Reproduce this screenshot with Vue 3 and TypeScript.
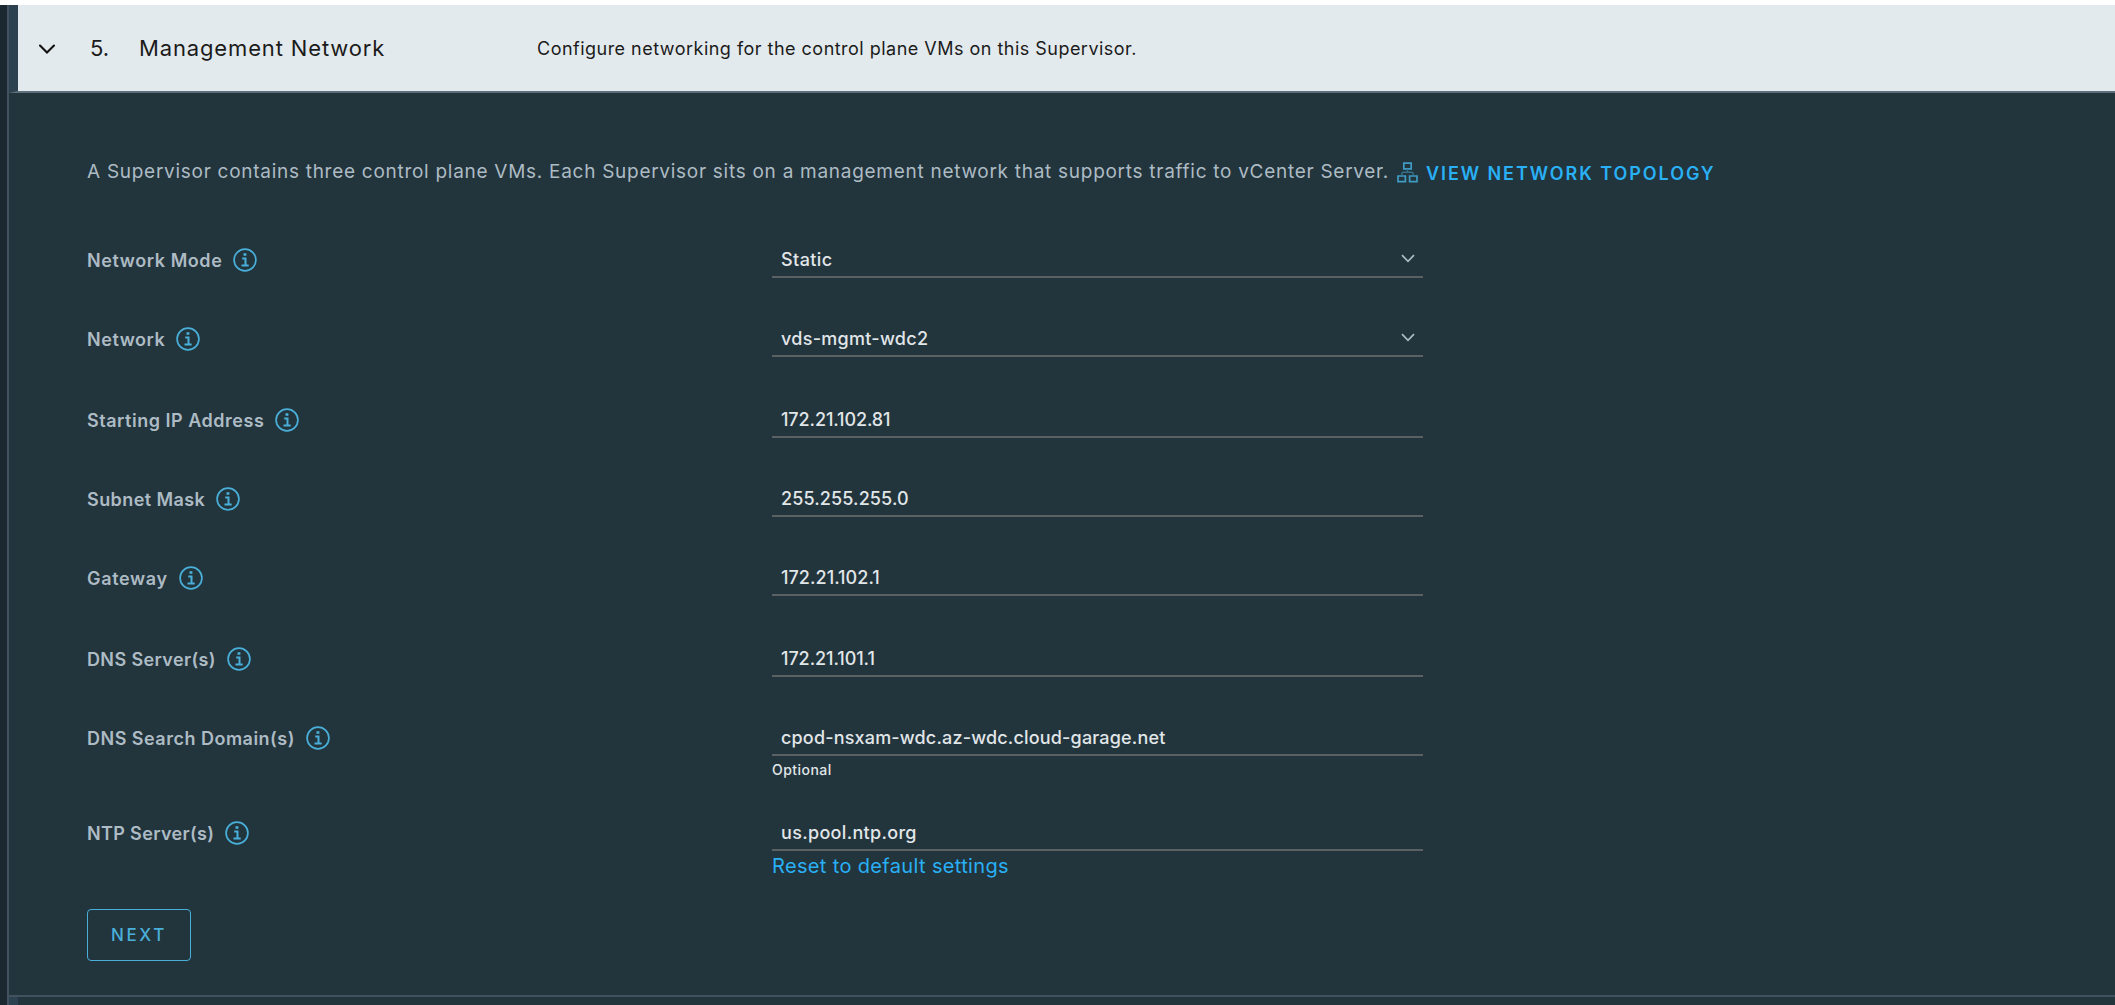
<script setup lang="ts">
interface Field {
  label: string
  value: string
  height: number
  labelSpacing: number
  valueSpacing: number
  select?: boolean
  hint?: string
  action?: string
}

const fields: Field[] = [
  { label: 'Network Mode', value: 'Static', height: 79, labelSpacing: 0.58, valueSpacing: 0.42, select: true },
  { label: 'Network', value: 'vds-mgmt-wdc2', height: 81, labelSpacing: 0.55, valueSpacing: 0.28, select: true },
  { label: 'Starting IP Address', value: '172.21.102.81', height: 79, labelSpacing: 0.52, valueSpacing: -0.1 },
  { label: 'Subnet Mask', value: '255.255.255.0', height: 79, labelSpacing: 0.42, valueSpacing: 0.12 },
  { label: 'Gateway', value: '172.21.102.1', height: 81, labelSpacing: 0.66, valueSpacing: 0.05 },
  { label: 'DNS Server(s)', value: '172.21.101.1', height: 79, labelSpacing: 0.37, valueSpacing: -0.07 },
  { label: 'DNS Search Domain(s)', value: 'cpod-nsxam-wdc.az-wdc.cloud-garage.net', height: 95, labelSpacing: 0.49, valueSpacing: 0.17, hint: 'Optional' },
  { label: 'NTP Server(s)', value: 'us.pool.ntp.org', height: 95, labelSpacing: 0.35, valueSpacing: 0.32, action: 'Reset to default settings' },
]
</script>

<template>
  <div class="page">
    <div class="gutter"></div>
    <main class="wizard">
      <header class="step-header">
        <svg class="caret" viewBox="0 0 16 10"><path d="M1 1.5 8 8.5 15 1.5" /></svg>
        <span class="step-number">5.</span>
        <h1 class="step-title">Management Network</h1>
        <span class="step-summary">Configure networking for the control plane VMs on this Supervisor.</span>
      </header>

      <section class="step-body">
        <div class="intro">
          <p>A Supervisor contains three control plane VMs. Each Supervisor sits on a management network that supports traffic to vCenter Server.</p>
          <a class="topology">
            <svg class="topology-icon" viewBox="0 0 21 21">
              <path d="M6.8 1.2h7.4v5.6H6.8zM1 14h7.4v5.6H1zM12.6 14H20v5.6h-7.4z" />
              <path class="link-line" d="M10.5 6.8v3.4M4.7 13.6v-1.4q0-2 2-2h7.6q2 0 2 2v1.4" />
            </svg>
            <span>VIEW NETWORK TOPOLOGY</span>
          </a>
        </div>

        <div v-for="f in fields" :key="f.label" class="row" :style="{ height: f.height + 'px' }">
          <div class="label">
            <span :style="{ letterSpacing: f.labelSpacing + 'px' }">{{ f.label }}</span>
            <svg class="info" viewBox="0 0 24 24">
              <circle cx="12" cy="12" r="10.9" />
              <path class="info-dot" d="M10.5 5.2h2.9v2.6h-2.9z" />
              <path class="info-stem" d="M9.2 10.4h3.3v7.1M8.5 17.6h7.2" />
            </svg>
          </div>
          <div class="control">
            <div class="input">
              <span :style="{ letterSpacing: f.valueSpacing + 'px' }">{{ f.value }}</span>
              <svg v-if="f.select" class="chevron" viewBox="0 0 14 9"><path d="M1 1.2 7 7.4 13 1.2" /></svg>
            </div>
            <div v-if="f.hint" class="hint">{{ f.hint }}</div>
            <a v-if="f.action" class="action">{{ f.action }}</a>
          </div>
        </div>

        <button class="next" type="button">NEXT</button>
      </section>

      <div class="next-step"></div>
    </main>
  </div>
</template>

<style>
body {
  background: #fff;
}
</style>

<style scoped>
.page {
  box-sizing: border-box;
  display: flex;
  height: 1005px;
  padding-top: 5px;
  overflow: hidden;
  background: #fff;
  font-family: Inter, "Liberation Sans", sans-serif;
}
.gutter {
  width: 7px;
  flex: none;
  background: #1b2830;
  border-right: 2px solid #42525f;
}
.wizard {
  flex: 1;
  display: flex;
  flex-direction: column;
  background: #22343c;
  white-space: nowrap;
}
.step-header {
  box-sizing: border-box;
  height: 88px;
  flex: none;
  display: flex;
  align-items: center;
  padding: 0 0 0 21px;
  border-left: 9px solid #2c4250;
  border-bottom: 2px solid #5d6e7c;
  background: #e3eaed;
  color: #1b1b1b;
}
.caret {
  width: 16px;
  height: 10px;
  margin-top: 2px;
  fill: none;
  stroke: #111;
  stroke-width: 2.1;
  stroke-linecap: round;
}
.step-number {
  width: 49px;
  margin-left: 35px;
  font-size: 22px;
  letter-spacing: 0;
}
.step-title {
  width: 398px;
  margin: 0;
  font-size: 22px;
  font-weight: 400;
  letter-spacing: 0.86px;
}
.step-summary {
  font-size: 18px;
  letter-spacing: 0.48px;
}
.step-body {
  height: 904px;
  flex: none;
  box-sizing: border-box;
  padding: 66px 0 0 78px;
  border-bottom: 2px solid #42525f;
}
.intro {
  display: flex;
  align-items: center;
  height: 26px;
  margin-bottom: 56px;
  color: #adbbc4;
}
.intro p {
  width: 1310px;
  margin: 0;
  padding-bottom: 1px;
  font-size: 19px;
  letter-spacing: 0.72px;
}
.topology {
  display: flex;
  align-items: center;
  padding-top: 2px;
  color: #29b0f5;
  font-size: 18px;
  font-weight: 600;
  letter-spacing: 1.93px;
}
.topology-icon {
  width: 21px;
  height: 21px;
  margin: -2px 8px 0 0;
  fill: none;
  stroke: #3f9cc4;
  stroke-width: 1.7;
}
.topology-icon .link-line {
  stroke: #34708b;
  stroke-width: 1.4;
}
.row {
  display: flex;
}
.label {
  display: flex;
  align-items: center;
  width: 685px;
  height: 25px;
  padding-top: 7px;
  color: #adbbc4;
  font-size: 18px;
  font-weight: 600;
}
.info {
  width: 24px;
  height: 24px;
  margin: -1px 0 0 11px;
  fill: none;
  stroke: #49afd9;
  stroke-width: 1.7;
}
.info .info-dot {
  fill: #49afd9;
  stroke: none;
}
.info .info-stem {
  stroke-width: 2;
}
.control {
  width: 651px;
}
.input {
  box-sizing: border-box;
  display: flex;
  justify-content: space-between;
  height: 37px;
  padding: 5px 8px 0 9px;
  border-bottom: 2px solid #5b6163;
  color: #e1e6e9;
  font-size: 18px;
  font-weight: 500;
  line-height: 28px;
}
.chevron {
  width: 14px;
  height: 9px;
  margin-top: 8px;
  fill: none;
  stroke: #adbbc4;
  stroke-width: 1.7;
}
.hint {
  color: #e1e6e9;
  font-size: 14px;
  font-weight: 500;
  letter-spacing: 0.45px;
  line-height: 28px;
}
.action {
  display: block;
  color: #29b0f5;
  font-size: 20px;
  letter-spacing: 0.35px;
  line-height: 31px;
}
.next {
  box-sizing: border-box;
  display: block;
  width: 104px;
  height: 52px;
  padding: 0;
  border: 1.5px solid #49afd9;
  border-radius: 4px;
  background: transparent;
  color: #49afd9;
  font-family: inherit;
  font-size: 17px;
  font-weight: 500;
  letter-spacing: 2.6px;
}
.next-step {
  flex: 1;
  border-left: 9px solid #2c4250;
}
</style>
